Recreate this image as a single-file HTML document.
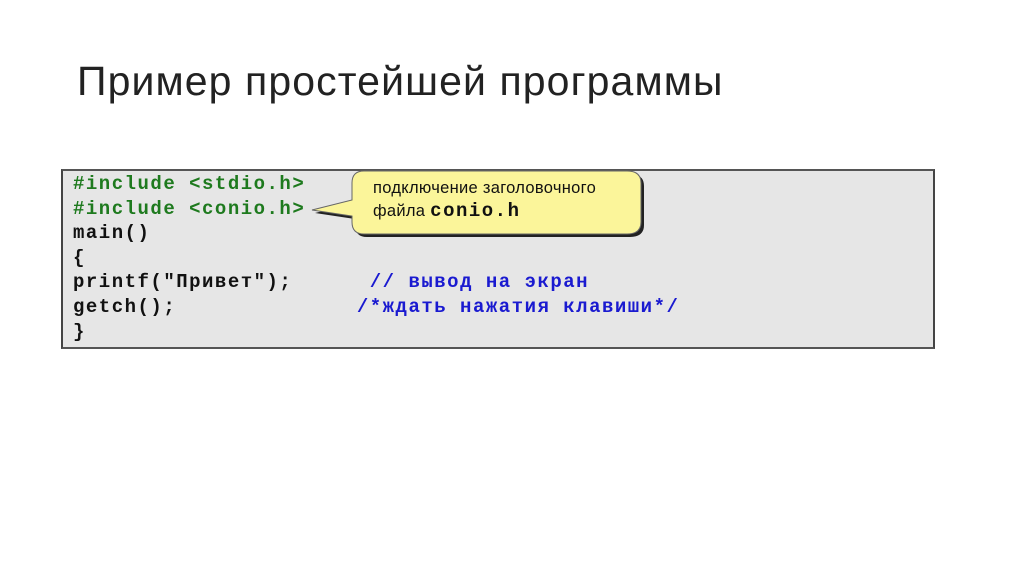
<!DOCTYPE html>
<html><head><meta charset="utf-8"><style>
body{margin:0;width:1024px;height:574px;background:#fff;position:relative;overflow:hidden;font-family:"Liberation Sans",sans-serif}
.t{position:absolute;left:77px;top:58px;font-size:41px;color:#222;white-space:nowrap;letter-spacing:1.1px}
.box{position:absolute;left:61px;top:169px;width:870px;height:176px;background:#e6e6e6;border-left:2px solid #444;border-right:2px solid #444;border-top:2px solid #555;border-bottom:2px solid #555}
.code{position:absolute;left:73px;top:172px;font-family:"Liberation Mono",monospace;font-weight:bold;font-size:19px;letter-spacing:1.5px;line-height:24.6px;color:#111;white-space:pre}
.g{color:#1e7a1e}.b{color:#1a1ad0}
.bub{position:absolute;left:0;top:0}
.bt{position:absolute;left:373px;top:177px;font-size:16.5px;line-height:23px;color:#111;white-space:nowrap;letter-spacing:0.3px}
.bt b{font-family:"Liberation Mono",monospace;font-size:19px;letter-spacing:1.5px}
</style></head><body>
<div class="t">Пример простейшей программы</div>
<div class="box"></div>
<div class="code"><span class="g">#include &lt;stdio.h&gt;</span>
<span class="g">#include &lt;conio.h&gt;</span>
main()
{
printf("Привет");      <span class="b">// вывод на экран</span>
getch();              <span class="b">/*ждать нажатия клавиши*/</span>
}</div>
<svg class="bub" width="1024" height="574">
<path d="M364 171 H627 Q641 171 641 183 V222 Q641 234 627 234 H364 Q352 234 352 222 V216 L312 210 L352 200 V183 Q352 171 364 171 Z" fill="#222" transform="translate(3,3)"/>
<path d="M364 171 H627 Q641 171 641 183 V222 Q641 234 627 234 H364 Q352 234 352 222 V216 L312 210 L352 200 V183 Q352 171 364 171 Z" fill="#fbf59a" stroke="#666" stroke-width="1"/>
</svg>
<div class="bt">подключение заголовочного<br>файла <b>conio.h</b></div>
</body></html>
